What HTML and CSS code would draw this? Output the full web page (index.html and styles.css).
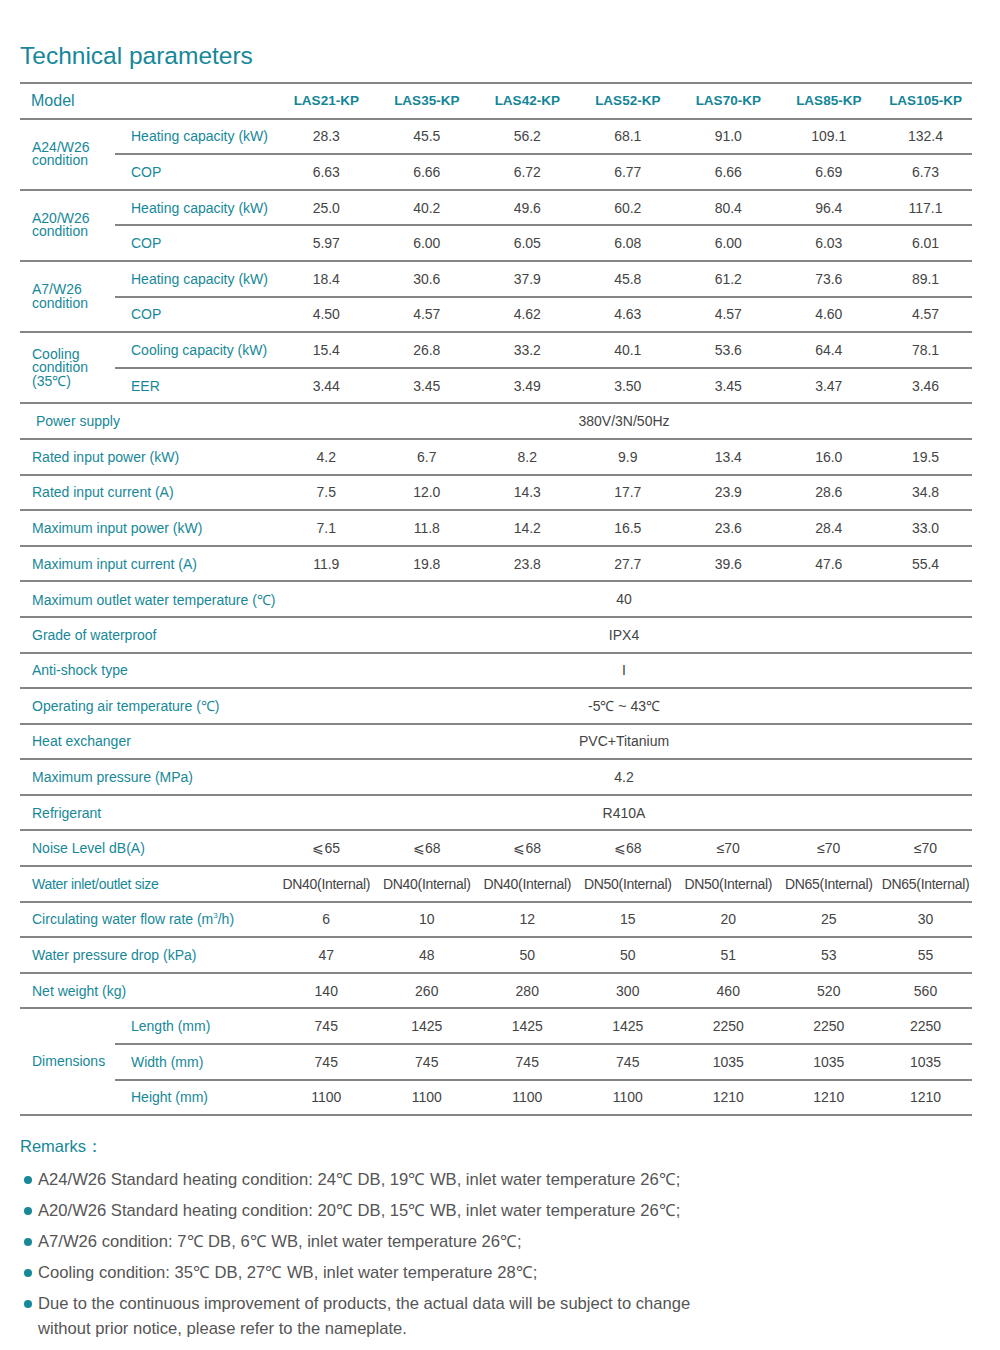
FILE: index.html
```html
<!DOCTYPE html>
<html>
<head>
    <meta charset='utf-8'>
    <title>Technical parameters</title>
    <link rel="stylesheet" href="styles.css">
</head>
<body>
    <div id="page">
        <h1 class="title">Technical parameters</h1>

        <table class="spec">
            <colgroup>
                <col class="c-group">
                <col class="c-sub">
                <col class="c-data"><col class="c-data"><col class="c-data"><col class="c-data"><col class="c-data"><col class="c-data">
                <col class="c-last">
            </colgroup>
            <tr class="head">
                <th colspan="2" class="model">Model</th>
                <th>LAS21-KP</th><th>LAS35-KP</th><th>LAS42-KP</th><th>LAS52-KP</th><th>LAS70-KP</th><th>LAS85-KP</th><th>LAS105-KP</th>
            </tr>

            <tr>
                <td rowspan="2" class="group">A24/W26<br>condition</td>
                <td class="sub">Heating capacity (kW)</td>
                <td>28.3</td><td>45.5</td><td>56.2</td><td>68.1</td><td>91.0</td><td>109.1</td><td>132.4</td>
            </tr>
            <tr>
                <td class="sub">COP</td>
                <td>6.63</td><td>6.66</td><td>6.72</td><td>6.77</td><td>6.66</td><td>6.69</td><td>6.73</td>
            </tr>

            <tr>
                <td rowspan="2" class="group">A20/W26<br>condition</td>
                <td class="sub">Heating capacity (kW)</td>
                <td>25.0</td><td>40.2</td><td>49.6</td><td>60.2</td><td>80.4</td><td>96.4</td><td>117.1</td>
            </tr>
            <tr>
                <td class="sub">COP</td>
                <td>5.97</td><td>6.00</td><td>6.05</td><td>6.08</td><td>6.00</td><td>6.03</td><td>6.01</td>
            </tr>

            <tr>
                <td rowspan="2" class="group">A7/W26<br>condition</td>
                <td class="sub">Heating capacity (kW)</td>
                <td>18.4</td><td>30.6</td><td>37.9</td><td>45.8</td><td>61.2</td><td>73.6</td><td>89.1</td>
            </tr>
            <tr>
                <td class="sub">COP</td>
                <td>4.50</td><td>4.57</td><td>4.62</td><td>4.63</td><td>4.57</td><td>4.60</td><td>4.57</td>
            </tr>

            <tr>
                <td rowspan="2" class="group">Cooling<br>condition<br>(35℃)</td>
                <td class="sub">Cooling capacity (kW)</td>
                <td>15.4</td><td>26.8</td><td>33.2</td><td>40.1</td><td>53.6</td><td>64.4</td><td>78.1</td>
            </tr>
            <tr>
                <td class="sub">EER</td>
                <td>3.44</td><td>3.45</td><td>3.49</td><td>3.50</td><td>3.45</td><td>3.47</td><td>3.46</td>
            </tr>

            <tr>
                <td colspan="2" class="label">&nbsp;Power supply</td>
                <td colspan="7">380V/3N/50Hz</td>
            </tr>
            <tr>
                <td colspan="2" class="label">Rated input power (kW)</td>
                <td>4.2</td><td>6.7</td><td>8.2</td><td>9.9</td><td>13.4</td><td>16.0</td><td>19.5</td>
            </tr>
            <tr>
                <td colspan="2" class="label">Rated input current (A)</td>
                <td>7.5</td><td>12.0</td><td>14.3</td><td>17.7</td><td>23.9</td><td>28.6</td><td>34.8</td>
            </tr>
            <tr>
                <td colspan="2" class="label">Maximum input power (kW)</td>
                <td>7.1</td><td>11.8</td><td>14.2</td><td>16.5</td><td>23.6</td><td>28.4</td><td>33.0</td>
            </tr>
            <tr>
                <td colspan="2" class="label">Maximum input current (A)</td>
                <td>11.9</td><td>19.8</td><td>23.8</td><td>27.7</td><td>39.6</td><td>47.6</td><td>55.4</td>
            </tr>
            <tr>
                <td colspan="2" class="label">Maximum outlet water temperature (℃)</td>
                <td colspan="7">40</td>
            </tr>
            <tr>
                <td colspan="2" class="label">Grade of waterproof</td>
                <td colspan="7">IPX4</td>
            </tr>
            <tr>
                <td colspan="2" class="label">Anti-shock type</td>
                <td colspan="7">I</td>
            </tr>
            <tr>
                <td colspan="2" class="label">Operating air temperature (℃)</td>
                <td colspan="7">-5℃ ~ 43℃</td>
            </tr>
            <tr>
                <td colspan="2" class="label">Heat exchanger</td>
                <td colspan="7">PVC+Titanium</td>
            </tr>
            <tr>
                <td colspan="2" class="label">Maximum pressure (MPa)</td>
                <td colspan="7">4.2</td>
            </tr>
            <tr>
                <td colspan="2" class="label">Refrigerant</td>
                <td colspan="7">R410A</td>
            </tr>
            <tr>
                <td colspan="2" class="label">Noise Level dB(A)</td>
                <td>⩽65</td><td>⩽68</td><td>⩽68</td><td>⩽68</td><td>≤70</td><td>≤70</td><td>≤70</td>
            </tr>
            <tr class="narrow">
                <td colspan="2" class="label">Water inlet/outlet size</td>
                <td>DN40(Internal)</td><td>DN40(Internal)</td><td>DN40(Internal)</td><td>DN50(Internal)</td><td>DN50(Internal)</td><td>DN65(Internal)</td><td>DN65(Internal)</td>
            </tr>
            <tr>
                <td colspan="2" class="label">Circulating water flow rate (m<sup>3</sup>/h)</td>
                <td>6</td><td>10</td><td>12</td><td>15</td><td>20</td><td>25</td><td>30</td>
            </tr>
            <tr>
                <td colspan="2" class="label">Water pressure drop (kPa)</td>
                <td>47</td><td>48</td><td>50</td><td>50</td><td>51</td><td>53</td><td>55</td>
            </tr>
            <tr>
                <td colspan="2" class="label">Net weight (kg)</td>
                <td>140</td><td>260</td><td>280</td><td>300</td><td>460</td><td>520</td><td>560</td>
            </tr>

            <tr>
                <td rowspan="3" class="group">Dimensions</td>
                <td class="sub">Length (mm)</td>
                <td>745</td><td>1425</td><td>1425</td><td>1425</td><td>2250</td><td>2250</td><td>2250</td>
            </tr>
            <tr>
                <td class="sub">Width (mm)</td>
                <td>745</td><td>745</td><td>745</td><td>745</td><td>1035</td><td>1035</td><td>1035</td>
            </tr>
            <tr>
                <td class="sub">Height (mm)</td>
                <td>1100</td><td>1100</td><td>1100</td><td>1100</td><td>1210</td><td>1210</td><td>1210</td>
            </tr>
        </table>

        <div class="remarks">
            <h2>Remarks：</h2>
            <ul>
                <li>A24/W26 Standard heating condition: 24℃ DB, 19℃ WB, inlet water temperature 26℃;</li>
                <li>A20/W26 Standard heating condition: 20℃ DB, 15℃ WB, inlet water temperature 26℃;</li>
                <li>A7/W26 condition: 7℃ DB, 6℃ WB, inlet water temperature 26℃;</li>
                <li>Cooling condition: 35℃ DB, 27℃ WB, inlet water temperature 28℃;</li>
                <li>Due to the continuous improvement of products, the actual data will be subject to change without prior notice, please refer to the nameplate.</li>
            </ul>
        </div>
    </div>
</body>
</html>
```

FILE: styles.css
```css
/* Page */
body {
    margin: 0;
    background: #fff;
    font-family: "Liberation Sans", Arial, sans-serif;
}

#page {
    padding: 41px 28px 0 20px;
}

.title {
    margin: 0 0 11px;
    font-size: 24.5px;
    font-weight: normal;
    line-height: 30px;
    color: #168898;
}


/* Table */
.spec {
    width: 952px;
    table-layout: fixed;
    border-collapse: collapse;
    border-top: 2px solid #858585;
}

.c-group { width: 95px; }
.c-sub { width: 161px; }
.c-data { width: 100.5px; }
.c-last { width: 93px; }

.spec td, .spec th {
    height: 33.6px;
    padding: 0;
    border-bottom: 2px solid #858585;
    text-align: center;
    font-size: 14px;
    color: #444;
    white-space: nowrap;
}

.spec th {
    font-size: 13.5px;
    font-weight: bold;
    color: #128597;
}

.spec th.model {
    text-align: left;
    padding-left: 11px;
    font-size: 16px;
    font-weight: normal;
    color: #168898;
}

.spec td.group {
    text-align: left;
    padding-left: 12px;
    line-height: 13.5px;
    color: #168898;
}

.spec td.sub {
    text-align: left;
    padding-left: 16px;
    color: #168898;
}

.spec td.label {
    text-align: left;
    padding-left: 12px;
    color: #168898;
}

.spec tr.narrow td {
    letter-spacing: -0.3px;
}

sup {
    font-size: 8px;
    line-height: 0;
}


/* Remarks */
.remarks h2 {
    margin: 20px 0 9px;
    font-size: 16.5px;
    font-weight: normal;
    color: #168898;
}

.remarks ul {
    width: 680px;
    margin: 0;
    padding: 0 0 0 18px;
    list-style: none;
}

.remarks li {
    position: relative;
    margin-bottom: 6px;
    font-size: 16.6px;
    line-height: 25px;
    color: #555;
}

.remarks li::before {
    content: '';
    position: absolute;
    left: -14px;
    top: 9px;
    width: 8px;
    height: 8px;
    border-radius: 50%;
    background: #168898;
}
```
